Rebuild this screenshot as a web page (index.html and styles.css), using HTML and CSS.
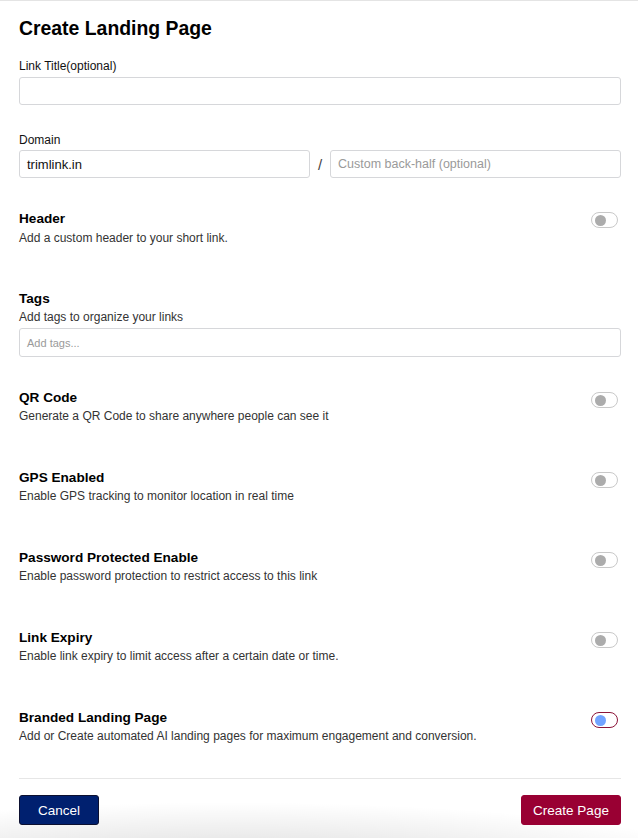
FILE: index.html
```html
<!DOCTYPE html>
<html lang="en">
<head>
<meta charset="utf-8">
<title>Create Landing Page</title>
<link rel="stylesheet" href="styles.css">
</head>
<body>
<div class="page">
  <h1 class="title">Create Landing Page</h1>

  <div class="field first">
    <label class="label">Link Title(optional)</label>
    <div class="input"></div>
  </div>

  <div class="field domain-field">
    <label class="label">Domain</label>
    <div class="domain-row">
      <div class="input value">trimlink.in</div>
      <span class="slash">/</span>
      <div class="input placeholder">Custom back-half (optional)</div>
    </div>
  </div>

  <div class="section header-sec">
    <div class="sec-text">
      <div class="sec-title">Header</div>
      <div class="sec-desc">Add a custom header to your short link.</div>
    </div>
    <span class="toggle"><span class="knob"></span></span>
  </div>

  <div class="section tags-sec">
    <div class="sec-text">
      <div class="sec-title">Tags</div>
      <div class="sec-desc">Add tags to organize your links</div>
      <div class="input tags placeholder">Add tags...</div>
    </div>
  </div>

  <div class="section qr-sec">
    <div class="sec-text">
      <div class="sec-title">QR Code</div>
      <div class="sec-desc">Generate a QR Code to share anywhere people can see it</div>
    </div>
    <span class="toggle"><span class="knob"></span></span>
  </div>

  <div class="section">
    <div class="sec-text">
      <div class="sec-title">GPS Enabled</div>
      <div class="sec-desc">Enable GPS tracking to monitor location in real time</div>
    </div>
    <span class="toggle"><span class="knob"></span></span>
  </div>

  <div class="section">
    <div class="sec-text">
      <div class="sec-title">Password Protected Enable</div>
      <div class="sec-desc">Enable password protection to restrict access to this link</div>
    </div>
    <span class="toggle"><span class="knob"></span></span>
  </div>

  <div class="section">
    <div class="sec-text">
      <div class="sec-title">Link Expiry</div>
      <div class="sec-desc">Enable link expiry to limit access after a certain date or time.</div>
    </div>
    <span class="toggle"><span class="knob"></span></span>
  </div>

  <div class="section">
    <div class="sec-text">
      <div class="sec-title">Branded Landing Page</div>
      <div class="sec-desc">Add or Create automated AI landing pages for maximum engagement and conversion.</div>
    </div>
    <span class="toggle focused"><span class="knob"></span></span>
  </div>

  <div class="footer">
    <button class="btn cancel">Cancel</button>
    <button class="btn create">Create Page</button>
  </div>
</div>
</body>
</html>
```

FILE: styles.css
```css
html {
  height: 100%;
}
body {
  margin: 0;
  min-height: 100%;
  background: #fff;
  font-family: "Liberation Sans", Arial, Helvetica, sans-serif;
  color: #111;
  background-image: radial-gradient(ellipse 520px 70px at 230px 872px, rgba(0,0,0,0.16), rgba(0,0,0,0) 100%);
  background-repeat: no-repeat;
}
.page {
  border-top: 1px solid #e4e4e4;
  padding: 15px 17px 0 19px;
  height: 822px;
  box-sizing: border-box;
}
.title {
  margin: 0;
  font-size: 19.4px;
  line-height: 24px;
  font-weight: bold;
  color: #000;
}
.field.first {
  margin-top: 19px;
}
.label {
  display: block;
  font-size: 12px;
  line-height: 14px;
  color: #111;
  margin-bottom: 4px;
}
.domain-field {
  margin-top: 28px;
}
.domain-field .label {
  margin-bottom: 3px;
}
.input {
  box-sizing: border-box;
  height: 28px;
  border: 1px solid #d6d7da;
  border-radius: 3px;
  background: #fff;
  padding: 0 7px;
  display: flex;
  align-items: center;
  font-size: 13px;
  color: #111;
}
.input.placeholder {
  color: #9a9a9a;
  font-size: 12.5px;
}
.domain-row {
  display: grid;
  grid-template-columns: 291px 20px 1fr;
  align-items: center;
}
.slash {
  text-align: center;
  font-size: 15px;
  color: #444;
}
.section {
  display: flex;
  justify-content: space-between;
  align-items: flex-start;
  margin-top: 46px;
}
.section.header-sec {
  margin-top: 32px;
}
.section.tags-sec {
  margin-top: 45px;
}
.section.qr-sec {
  margin-top: 32px;
}
.sec-text {
  flex: 1;
}
.sec-title {
  font-size: 13.6px;
  line-height: 17px;
  font-weight: bold;
  color: #000;
}
.sec-desc {
  margin-top: 3px;
  font-size: 12px;
  line-height: 14px;
  color: #333;
}
.header-sec .sec-desc {
  margin-top: 4px;
}
.input.tags {
  margin-top: 4px;
  height: 29px;
  font-size: 11px;
}
.toggle {
  box-sizing: border-box;
  width: 27px;
  height: 16px;
  border: 1px solid #c9c9c9;
  border-radius: 8px;
  margin-top: 3px;
  margin-right: 3px;
  display: flex;
  align-items: center;
  padding-left: 3px;
  background: #fff;
}
.header-sec .toggle {
  margin-top: 2px;
}
.knob {
  width: 11px;
  height: 11px;
  border-radius: 50%;
  background: #acacac;
}
.toggle.focused {
  border: 1.5px solid #8c1438;
  padding-left: 2.5px;
}
.toggle.focused .knob {
  background: #72a3ff;
}
.footer {
  margin-top: 35px;
  border-top: 1px solid #e6e6e6;
  padding-top: 16px;
  display: flex;
  justify-content: space-between;
}
.btn {
  font-family: "Liberation Sans", Arial, Helvetica, sans-serif;
  font-size: 13.5px;
  color: #fff;
  height: 30px;
  border-radius: 3px;
  cursor: pointer;
}
.cancel {
  width: 80px;
  background: #00206f;
  border: 1px solid #0c1030;
}
.create {
  width: 100px;
  background: #990033;
  border: 1px solid #990033;
}
```
